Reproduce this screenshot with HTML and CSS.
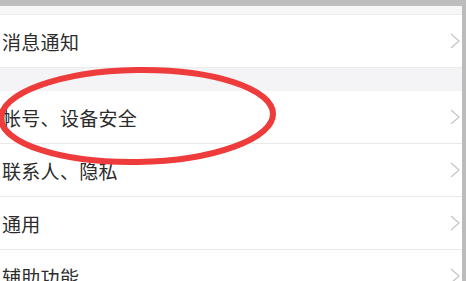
FILE: index.html
```html
<!DOCTYPE html>
<html lang="zh">
<head>
    <meta charset="UTF-8">
    <meta name="viewport" content="width=device-width, initial-scale=1.0">
    <title>设置</title>
    <link rel="stylesheet" href="styles.css">
</head>
<body>
    <div class="screen">
        <div class="top-strip"></div>

        <div class="group">
            <div class="row">
                <span class="label">消息通知</span>
                <svg class="chevron" viewBox="0 0 10 16"><polyline points="1,1 9,8 1,15"/></svg>
            </div>
        </div>

        <div class="gap"></div>

        <div class="group">
            <div class="row">
                <span class="label">帐号、设备安全</span>
                <svg class="chevron" viewBox="0 0 10 16"><polyline points="1,1 9,8 1,15"/></svg>
            </div>
            <div class="row">
                <span class="label">联系人、隐私</span>
                <svg class="chevron" viewBox="0 0 10 16"><polyline points="1,1 9,8 1,15"/></svg>
            </div>
            <div class="row">
                <span class="label">通用</span>
                <svg class="chevron" viewBox="0 0 10 16"><polyline points="1,1 9,8 1,15"/></svg>
            </div>
            <div class="row">
                <span class="label">辅助功能</span>
                <svg class="chevron" viewBox="0 0 10 16"><polyline points="1,1 9,8 1,15"/></svg>
            </div>
        </div>

        <!-- 红圈标注 -->
        <svg class="mark" viewBox="0 0 466 281">
            <ellipse cx="137" cy="116" rx="136" ry="46" transform="rotate(-1 137 116)"/>
        </svg>
    </div>
</body>
</html>
```

FILE: styles.css
```css
body {
    margin: 0;
    font-family: "Noto Sans CJK SC", "Noto Sans", sans-serif;
    background-color: #ffffff;
    overflow: hidden;
}

.screen {
    position: relative;
    width: 462px;
    height: 275px;
    border-top: 6px solid #bdbdbd;
    border-right: 4px solid #bcbcbc;
    overflow: hidden;
}

.top-strip {
    height: 8px;
    background-color: #f7f7f7;
    border-bottom: 1px solid #ededed;
}

.gap {
    height: 23px;
    background-color: #f4f4f6;
    border-top: 1px solid #ececec;
}

.row {
    display: flex;
    align-items: center;
    justify-content: space-between;
    height: 52px;
    padding-left: 2px;
    padding-right: 2px;
    background-color: #ffffff;
    border-bottom: 1px solid #e9e9e9;
}

.group .row:last-child {
    border-bottom: none;
}

.label {
    font-size: 19px;
    color: #2b2b2b;
    letter-spacing: 0.3px;
}

.chevron {
    width: 10px;
    height: 16px;
    fill: none;
    stroke: #c8c8c8;
    stroke-width: 1.4;
}

.mark {
    position: absolute;
    top: -6px;
    left: 0;
    width: 466px;
    height: 281px;
    pointer-events: none;
}

.mark ellipse {
    fill: none;
    stroke: #ee3b3b;
    stroke-width: 6;
}
```
